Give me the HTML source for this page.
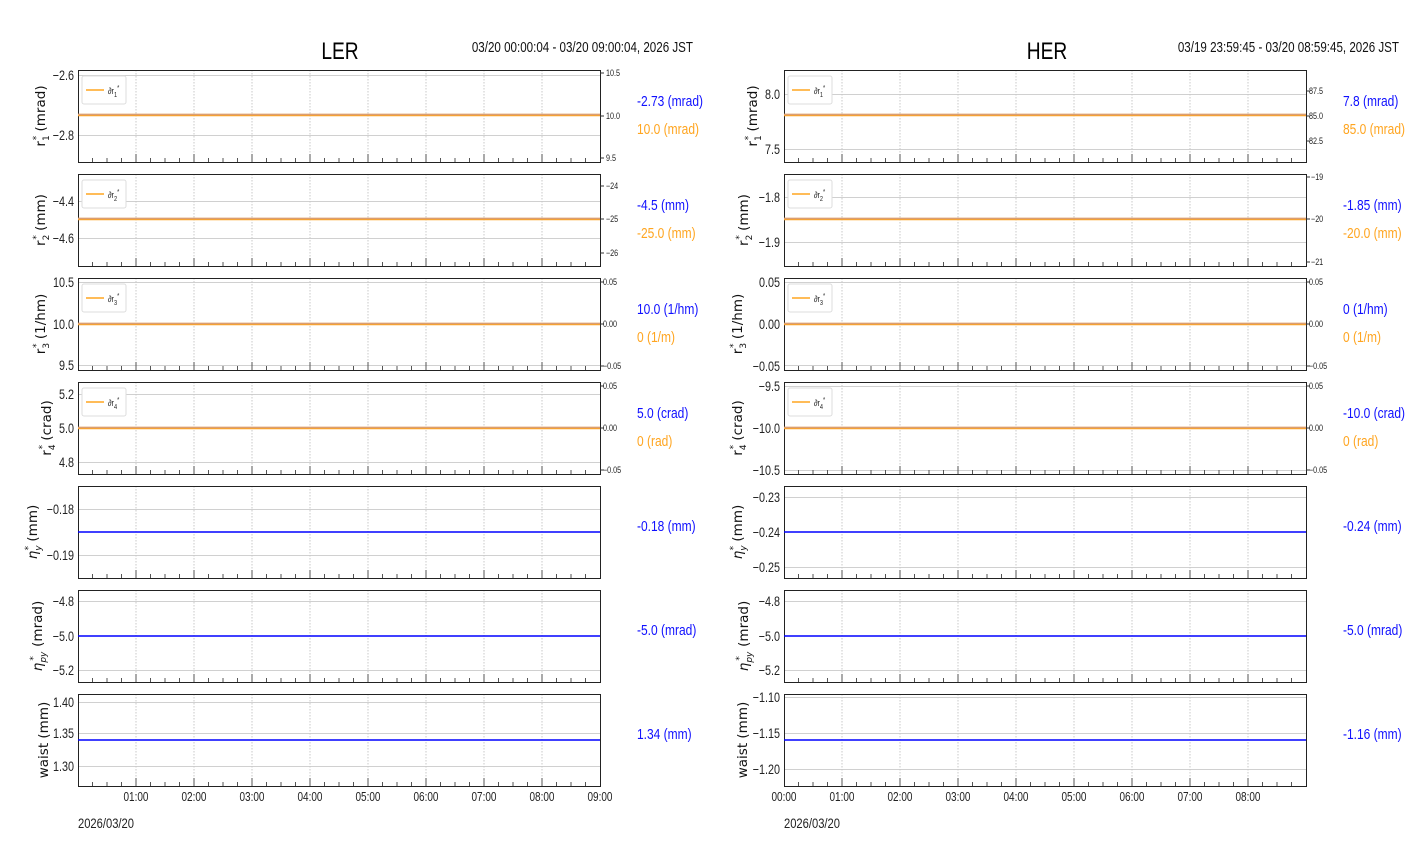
<!DOCTYPE html>
<html><head><meta charset="utf-8"><style>
html,body{margin:0;padding:0;background:#fff;}
svg{display:block}
text{font-family:"Liberation Sans",sans-serif;}
text:not(.yl){transform-box:fill-box;transform:scaleX(.8);transform-origin:0 50%}
text[text-anchor="end"]{transform-origin:100% 50%}
text[text-anchor="middle"]:not(.yl),.mid text{transform-origin:50% 50%}
.t{font-size:13.5px;fill:#222}
.mid text{font-size:12.5px}
.s{font-size:9px;fill:#222}
.yl{font-family:"DejaVu Sans",sans-serif;font-size:13.5px;fill:#111}
.b{font-size:15px;fill:#1010ff}
.o{font-size:15px;fill:#ffa520}
.g{stroke:#d0d0d0;stroke-width:1}
</style></head><body>
<svg width="1412" height="864" viewBox="0 0 1412 864" xmlns="http://www.w3.org/2000/svg">
<defs>
<g id="fr">
 <g stroke="#c8c8c8" stroke-dasharray="1.5,1.5" stroke-width="1">
  <path d="M58 0V92M116 0V92M174 0V92M232 0V92M290 0V92M348 0V92M406 0V92M464 0V92"/>
 </g>
 <g stroke="#555" stroke-width="1">
  <path d="M58 92v-8M116 92v-8M174 92v-8M232 92v-8M290 92v-8M348 92v-8M406 92v-8M464 92v-8"/>
  <path d="M14.5 92v-4M29 92v-4M43.5 92v-4M72.5 92v-4M87 92v-4M101.5 92v-4M130.5 92v-4M145 92v-4M159.5 92v-4M188.5 92v-4M203 92v-4M217.5 92v-4M246.5 92v-4M261 92v-4M275.5 92v-4M304.5 92v-4M319 92v-4M333.5 92v-4M362.5 92v-4M377 92v-4M391.5 92v-4M420.5 92v-4M435 92v-4M449.5 92v-4M478.5 92v-4M493 92v-4M507.5 92v-4"/>
 </g>
 <rect x="0.5" y="0.5" width="522" height="92" fill="none" stroke="#222" stroke-width="1"/>
</g>
<g id="leg"><rect x="0" y="0" width="44" height="28" rx="2" fill="#fff" stroke="#ddd"/><path d="M4 14H22" stroke="#ffa520" stroke-width="1.5"/></g>
<g id="ol"><path d="M0 0H522" stroke="#ffa520" stroke-width="2.5"/><path d="M0 -0.5H522" stroke="#c89a9a" stroke-opacity="0.7" stroke-width="1.5"/></g>
</defs>

<text x="340" y="59" text-anchor="middle" style="font-size:24px;fill:#000">LER</text>
<text x="693" y="52" text-anchor="end" style="font-size:14.5px;fill:#111">03/20 00:00:04 - 03/20 09:00:04, 2026 JST</text>
<text x="1047" y="59" text-anchor="middle" style="font-size:24px;fill:#000">HER</text>
<text x="1399" y="52" text-anchor="end" style="font-size:14.5px;fill:#111">03/19 23:59:45 - 03/20 08:59:45, 2026 JST</text>

<!-- ================= LER ================= -->
<g>
<path class="g" d="M78 75.5H600M78 135.5H600"/>
<use href="#fr" x="78" y="70"/>
<use href="#ol" x="78" y="115"/>
<use href="#leg" x="82" y="76"/><text x="108" y="94" class="s">∂r<tspan font-size="7" dy="3">1</tspan><tspan font-size="7" dy="-7">*</tspan></text>
<text x="74" y="80" text-anchor="end" class="t">−2.6</text><text x="74" y="140" text-anchor="end" class="t">−2.8</text>
<path d="M600 73h4M600 116h4M600 158h4" stroke="#333"/>
<text x="606" y="76" class="s">10.5</text><text x="606" y="119" class="s">10.0</text><text x="606" y="161" class="s">9.5</text>

<path class="g" d="M78 201.5H600M78 238.5H600"/>
<use href="#fr" x="78" y="174"/>
<use href="#ol" x="78" y="219"/>
<use href="#leg" x="82" y="180"/><text x="108" y="198" class="s">∂r<tspan font-size="7" dy="3">2</tspan><tspan font-size="7" dy="-7">*</tspan></text>
<text x="74" y="206" text-anchor="end" class="t">−4.4</text><text x="74" y="243" text-anchor="end" class="t">−4.6</text>
<path d="M600 186h4M600 219h4M600 253h4" stroke="#333"/>
<text x="606" y="189" class="s">−24</text><text x="606" y="222" class="s">−25</text><text x="606" y="256" class="s">−26</text>

<path class="g" d="M78 282.5H600M78 365.5H600"/>
<use href="#fr" x="78" y="278"/>
<use href="#ol" x="78" y="324"/>
<use href="#leg" x="82" y="284"/><text x="108" y="302" class="s">∂r<tspan font-size="7" dy="3">3</tspan><tspan font-size="7" dy="-7">*</tspan></text>
<text x="74" y="287" text-anchor="end" class="t">10.5</text><text x="74" y="329" text-anchor="end" class="t">10.0</text><text x="74" y="370" text-anchor="end" class="t">9.5</text>
<path d="M600 282h4M600 324h4M600 366h4" stroke="#333"/>
<text x="603" y="285" class="s">0.05</text><text x="603" y="327" class="s">0.00</text><text x="603" y="369" class="s">−0.05</text>

<path class="g" d="M78 394.5H600M78 462.5H600"/>
<use href="#fr" x="78" y="382"/>
<use href="#ol" x="78" y="428"/>
<use href="#leg" x="82" y="388"/><text x="108" y="406" class="s">∂r<tspan font-size="7" dy="3">4</tspan><tspan font-size="7" dy="-7">*</tspan></text>
<text x="74" y="399" text-anchor="end" class="t">5.2</text><text x="74" y="433" text-anchor="end" class="t">5.0</text><text x="74" y="467" text-anchor="end" class="t">4.8</text>
<path d="M600 386h4M600 428h4M600 470h4" stroke="#333"/>
<text x="603" y="389" class="s">0.05</text><text x="603" y="431" class="s">0.00</text><text x="603" y="473" class="s">−0.05</text>

<path class="g" d="M78 509.5H600M78 555.5H600"/>
<use href="#fr" x="78" y="486"/>
<path d="M78 532H600" stroke="#0000ff" stroke-width="1.5"/>
<text x="74" y="514" text-anchor="end" class="t">−0.18</text><text x="74" y="560" text-anchor="end" class="t">−0.19</text>

<path class="g" d="M78 601.5H600M78 670.5H600"/>
<use href="#fr" x="78" y="590"/>
<path d="M78 636H600" stroke="#0000ff" stroke-width="1.5"/>
<text x="74" y="606" text-anchor="end" class="t">−4.8</text><text x="74" y="641" text-anchor="end" class="t">−5.0</text><text x="74" y="675" text-anchor="end" class="t">−5.2</text>

<path class="g" d="M78 702.5H600M78 733.5H600M78 766.5H600"/>
<use href="#fr" x="78" y="694"/>
<path d="M78 740H600" stroke="#0000ff" stroke-width="1.5"/>
<text x="74" y="707" text-anchor="end" class="t">1.40</text><text x="74" y="738" text-anchor="end" class="t">1.35</text><text x="74" y="771" text-anchor="end" class="t">1.30</text>

<text transform="translate(45,116) rotate(-90)" text-anchor="middle" class="yl">r<tspan font-size="9" dy="4">1</tspan><tspan font-size="9" dx="-5" dy="-10">*</tspan><tspan dy="6"> (mrad)</tspan></text>
<text transform="translate(45,220) rotate(-90)" text-anchor="middle" class="yl">r<tspan font-size="9" dy="4">2</tspan><tspan font-size="9" dx="-5" dy="-10">*</tspan><tspan dy="6"> (mm)</tspan></text>
<text transform="translate(45,324) rotate(-90)" text-anchor="middle" class="yl">r<tspan font-size="9" dy="4">3</tspan><tspan font-size="9" dx="-5" dy="-10">*</tspan><tspan dy="6"> (1/hm)</tspan></text>
<text transform="translate(51,428) rotate(-90)" text-anchor="middle" class="yl">r<tspan font-size="9" dy="4">4</tspan><tspan font-size="9" dx="-5" dy="-10">*</tspan><tspan dy="6"> (crad)</tspan></text>
<text transform="translate(37,532) rotate(-90)" text-anchor="middle" class="yl"><tspan font-style="italic">η</tspan><tspan font-size="9" dy="4" font-style="italic">y</tspan><tspan font-size="9" dx="-5" dy="-10">*</tspan><tspan dy="6"> (mm)</tspan></text>
<text transform="translate(42,636) rotate(-90)" text-anchor="middle" class="yl"><tspan font-style="italic">η</tspan><tspan font-size="9" dy="4" font-style="italic">py</tspan><tspan font-size="9" dx="-9" dy="-10">*</tspan><tspan dx="5" dy="6"> (mrad)</tspan></text>
<text transform="translate(48,740) rotate(-90)" text-anchor="middle" class="yl">waist (mm)</text>

<text x="637" y="106" class="b">-2.73 (mrad)</text><text x="637" y="134" class="o">10.0 (mrad)</text>
<text x="637" y="210" class="b">-4.5 (mm)</text><text x="637" y="238" class="o">-25.0 (mm)</text>
<text x="637" y="314" class="b">10.0 (1/hm)</text><text x="637" y="342" class="o">0 (1/m)</text>
<text x="637" y="418" class="b">5.0 (crad)</text><text x="637" y="446" class="o">0 (rad)</text>
<text x="637" y="531" class="b">-0.18 (mm)</text>
<text x="637" y="635" class="b">-5.0 (mrad)</text>
<text x="637" y="739" class="b">1.34 (mm)</text>

<g class="t mid" text-anchor="middle">
<text x="136" y="801">01:00</text><text x="194" y="801">02:00</text><text x="252" y="801">03:00</text><text x="310" y="801">04:00</text><text x="368" y="801">05:00</text><text x="426" y="801">06:00</text><text x="484" y="801">07:00</text><text x="542" y="801">08:00</text><text x="600" y="801">09:00</text>
</g>
<text x="78" y="828" class="t" style="font-size:14px">2026/03/20</text>
</g>

<!-- ================= HER ================= -->
<g>
<path class="g" d="M784 94.5H1306M784 149.5H1306"/>
<use href="#fr" x="784" y="70"/>
<use href="#ol" x="784" y="115"/>
<use href="#leg" x="788" y="76"/><text x="814" y="94" class="s">∂r<tspan font-size="7" dy="3">1</tspan><tspan font-size="7" dy="-7">*</tspan></text>
<text x="780" y="99" text-anchor="end" class="t">8.0</text><text x="780" y="154" text-anchor="end" class="t">7.5</text>
<path d="M1306 91h4M1306 116h4M1306 141h4" stroke="#333"/>
<text x="1309" y="94" class="s">87.5</text><text x="1309" y="119" class="s">85.0</text><text x="1309" y="144" class="s">82.5</text>

<path class="g" d="M784 197.5H1306M784 242.5H1306"/>
<use href="#fr" x="784" y="174"/>
<use href="#ol" x="784" y="219"/>
<use href="#leg" x="788" y="180"/><text x="814" y="198" class="s">∂r<tspan font-size="7" dy="3">2</tspan><tspan font-size="7" dy="-7">*</tspan></text>
<text x="780" y="202" text-anchor="end" class="t">−1.8</text><text x="780" y="247" text-anchor="end" class="t">−1.9</text>
<path d="M1306 177h4M1306 219h4M1306 262h4" stroke="#333"/>
<text x="1311" y="180" class="s">−19</text><text x="1311" y="222" class="s">−20</text><text x="1311" y="265" class="s">−21</text>

<path class="g" d="M784 282.5H1306M784 365.5H1306"/>
<use href="#fr" x="784" y="278"/>
<use href="#ol" x="784" y="324"/>
<use href="#leg" x="788" y="284"/><text x="814" y="302" class="s">∂r<tspan font-size="7" dy="3">3</tspan><tspan font-size="7" dy="-7">*</tspan></text>
<text x="780" y="287" text-anchor="end" class="t">0.05</text><text x="780" y="329" text-anchor="end" class="t">0.00</text><text x="780" y="371" text-anchor="end" class="t">−0.05</text>
<path d="M1306 282h4M1306 324h4M1306 366h4" stroke="#333"/>
<text x="1309" y="285" class="s">0.05</text><text x="1309" y="327" class="s">0.00</text><text x="1309" y="369" class="s">−0.05</text>

<path class="g" d="M784 386.5H1306M784 470.5H1306"/>
<use href="#fr" x="784" y="382"/>
<use href="#ol" x="784" y="428"/>
<use href="#leg" x="788" y="388"/><text x="814" y="406" class="s">∂r<tspan font-size="7" dy="3">4</tspan><tspan font-size="7" dy="-7">*</tspan></text>
<text x="780" y="391" text-anchor="end" class="t">−9.5</text><text x="780" y="433" text-anchor="end" class="t">−10.0</text><text x="780" y="475" text-anchor="end" class="t">−10.5</text>
<path d="M1306 386h4M1306 428h4M1306 470h4" stroke="#333"/>
<text x="1309" y="389" class="s">0.05</text><text x="1309" y="431" class="s">0.00</text><text x="1309" y="473" class="s">−0.05</text>

<path class="g" d="M784 497.5H1306M784 567.5H1306"/>
<use href="#fr" x="784" y="486"/>
<path d="M784 532H1306" stroke="#0000ff" stroke-width="1.5"/>
<text x="780" y="502" text-anchor="end" class="t">−0.23</text><text x="780" y="537" text-anchor="end" class="t">−0.24</text><text x="780" y="572" text-anchor="end" class="t">−0.25</text>

<path class="g" d="M784 601.5H1306M784 670.5H1306"/>
<use href="#fr" x="784" y="590"/>
<path d="M784 636H1306" stroke="#0000ff" stroke-width="1.5"/>
<text x="780" y="606" text-anchor="end" class="t">−4.8</text><text x="780" y="641" text-anchor="end" class="t">−5.0</text><text x="780" y="675" text-anchor="end" class="t">−5.2</text>

<path class="g" d="M784 697.5H1306M784 733.5H1306M784 769.5H1306"/>
<use href="#fr" x="784" y="694"/>
<path d="M784 740H1306" stroke="#0000ff" stroke-width="1.5"/>
<text x="780" y="702" text-anchor="end" class="t">−1.10</text><text x="780" y="738" text-anchor="end" class="t">−1.15</text><text x="780" y="774" text-anchor="end" class="t">−1.20</text>

<text transform="translate(757,116) rotate(-90)" text-anchor="middle" class="yl">r<tspan font-size="9" dy="4">1</tspan><tspan font-size="9" dx="-5" dy="-10">*</tspan><tspan dy="6"> (mrad)</tspan></text>
<text transform="translate(748,220) rotate(-90)" text-anchor="middle" class="yl">r<tspan font-size="9" dy="4">2</tspan><tspan font-size="9" dx="-5" dy="-10">*</tspan><tspan dy="6"> (mm)</tspan></text>
<text transform="translate(742,324) rotate(-90)" text-anchor="middle" class="yl">r<tspan font-size="9" dy="4">3</tspan><tspan font-size="9" dx="-5" dy="-10">*</tspan><tspan dy="6"> (1/hm)</tspan></text>
<text transform="translate(742,428) rotate(-90)" text-anchor="middle" class="yl">r<tspan font-size="9" dy="4">4</tspan><tspan font-size="9" dx="-5" dy="-10">*</tspan><tspan dy="6"> (crad)</tspan></text>
<text transform="translate(742,532) rotate(-90)" text-anchor="middle" class="yl"><tspan font-style="italic">η</tspan><tspan font-size="9" dy="4" font-style="italic">y</tspan><tspan font-size="9" dx="-5" dy="-10">*</tspan><tspan dy="6"> (mm)</tspan></text>
<text transform="translate(748,636) rotate(-90)" text-anchor="middle" class="yl"><tspan font-style="italic">η</tspan><tspan font-size="9" dy="4" font-style="italic">py</tspan><tspan font-size="9" dx="-9" dy="-10">*</tspan><tspan dx="5" dy="6"> (mrad)</tspan></text>
<text transform="translate(747,740) rotate(-90)" text-anchor="middle" class="yl">waist (mm)</text>

<text x="1343" y="106" class="b">7.8 (mrad)</text><text x="1343" y="134" class="o">85.0 (mrad)</text>
<text x="1343" y="210" class="b">-1.85 (mm)</text><text x="1343" y="238" class="o">-20.0 (mm)</text>
<text x="1343" y="314" class="b">0 (1/hm)</text><text x="1343" y="342" class="o">0 (1/m)</text>
<text x="1343" y="418" class="b">-10.0 (crad)</text><text x="1343" y="446" class="o">0 (rad)</text>
<text x="1343" y="531" class="b">-0.24 (mm)</text>
<text x="1343" y="635" class="b">-5.0 (mrad)</text>
<text x="1343" y="739" class="b">-1.16 (mm)</text>

<g class="t mid" text-anchor="middle">
<text x="784" y="801">00:00</text><text x="842" y="801">01:00</text><text x="900" y="801">02:00</text><text x="958" y="801">03:00</text><text x="1016" y="801">04:00</text><text x="1074" y="801">05:00</text><text x="1132" y="801">06:00</text><text x="1190" y="801">07:00</text><text x="1248" y="801">08:00</text>
</g>
<text x="784" y="828" class="t" style="font-size:14px">2026/03/20</text>
</g>
</svg>
</body></html>
